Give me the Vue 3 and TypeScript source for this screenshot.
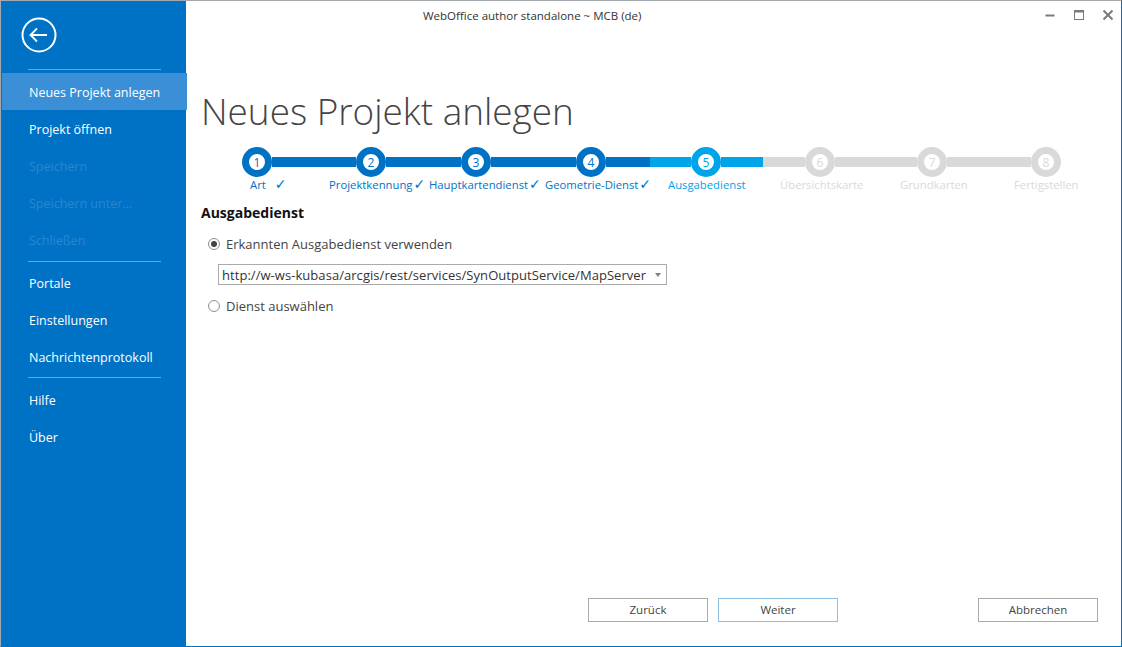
<script setup lang="ts">
type State = "done" | "current" | "todo";

interface Step {
	num: number;
	label: string;
	state: State;
	width: number;
	circleAt: number;
	labelAt: number;
}

type MenuEntry = { sep: true; mid?: boolean } | { sep?: false; text: string; active?: boolean; disabled?: boolean };

const menu: MenuEntry[] = [
	{ text: "Neues Projekt anlegen", active: true },
	{ text: "Projekt öffnen" },
	{ text: "Speichern", disabled: true },
	{ text: "Speichern unter...", disabled: true },
	{ text: "Schließen", disabled: true },
	{ sep: true, mid: true },
	{ text: "Portale" },
	{ text: "Einstellungen" },
	{ text: "Nachrichtenprotokoll" },
	{ sep: true },
	{ text: "Hilfe" },
	{ text: "Über" },
];

const steps: Step[] = [
	{ num: 1, label: "Art", state: "done", width: 114, circleAt: 57, labelAt: 50 },
	{ num: 2, label: "Projektkennung", state: "done", width: 109, circleAt: 57, labelAt: 15 },
	{ num: 3, label: "Hauptkartendienst", state: "done", width: 110, circleAt: 53, labelAt: 6 },
	{ num: 4, label: "Geometrie-Dienst", state: "done", width: 117, circleAt: 58, labelAt: 12 },
	{ num: 5, label: "Ausgabedienst", state: "current", width: 113, circleAt: 56, labelAt: 18 },
	{ num: 6, label: "Übersichtskarte", state: "todo", width: 113, circleAt: 57, labelAt: 17 },
	{ num: 7, label: "Grundkarten", state: "todo", width: 114, circleAt: 56, labelAt: 24 },
	{ num: 8, label: "Fertigstellen", state: "todo", width: 112, circleAt: 56, labelAt: 24 },
];
</script>

<template>
	<div class="window">
		<aside class="sidebar">
			<button class="back" aria-label="Zurück">
				<svg width="36" height="36" viewBox="0 0 36 36" fill="none" stroke="#fff">
					<circle cx="18" cy="18" r="16.5" stroke-width="2" />
					<path d="M9.5 18H26M16 11.5L9.5 18L16 24.5" stroke-width="1.8" />
				</svg>
			</button>
			<div class="sep"></div>
			<template v-for="(item, i) in menu" :key="i">
				<div v-if="item.sep" class="sep" :class="{ mid: item.mid }"></div>
				<div v-else class="item" :class="{ active: item.active, disabled: item.disabled }">{{ item.text }}</div>
			</template>
		</aside>

		<main class="main">
			<header class="titlebar">
				<span class="apptitle">WebOffice author standalone ~ MCB (de)</span>
				<div class="winctl">
					<svg width="12" height="12" viewBox="0 0 12 12"><path d="M1.5 6.5h9" stroke="#7a7a7a" stroke-width="2" /></svg>
					<svg width="12" height="12" viewBox="0 0 12 12" fill="none" stroke="#7a7a7a"><rect x="1.5" y="1.5" width="9" height="9" /><path d="M1.5 2.5h9" stroke-width="2" /></svg>
					<svg width="12" height="12" viewBox="0 0 12 12" stroke="#7a7a7a" stroke-width="2"><path d="M1.5 1.5l9 9M10.5 1.5l-9 9" /></svg>
				</div>
			</header>

			<h1 class="title">Neues Projekt anlegen</h1>

			<div class="stepper">
				<div
					v-for="(s, i) in steps"
					:key="s.num"
					class="step"
					:class="s.state"
					:style="{ width: s.width + 'px' }"
				>
					<div class="track">
						<div class="bar" :class="{ none: i === 0 }" :style="{ width: s.circleAt - 15 + 'px' }"></div>
						<div class="circle"><span>{{ s.num }}</span></div>
						<div class="bar grow" :class="{ none: i === steps.length - 1 }"></div>
					</div>
					<div class="label" :style="{ marginLeft: s.labelAt + 'px' }">
						{{ s.label }}<span v-if="s.state === 'done'" class="check" :class="{ wide: i === 0 }">✓</span>
					</div>
				</div>
			</div>

			<h2 class="section">Ausgabedienst</h2>

			<label class="radio">
				<span class="dot on"></span>
				Erkannten Ausgabedienst verwenden
			</label>
			<div class="select">
				<span>http://w-ws-kubasa/arcgis/rest/services/SynOutputService/MapServer</span>
				<i class="caret"></i>
			</div>
			<label class="radio second">
				<span class="dot"></span>
				Dienst auswählen
			</label>

			<footer class="actions">
				<button class="btn">Zurück</button>
				<button class="btn focus">Weiter</button>
				<button class="btn cancel">Abbrechen</button>
			</footer>
		</main>
	</div>
</template>

<style>
html,
body {
	margin: 0;
	background: #fff;
}
</style>

<style scoped>
.window {
	width: 1122px;
	height: 647px;
	box-sizing: border-box;
	display: flex;
	border-top: 1px solid #a4a9ad;
	border-left: 1px solid #a4a9ad;
	border-right: 1px solid #0072c6;
	border-bottom: 1px solid #0072c6;
	background: #fff;
	font-family: "Open Sans", sans-serif;
	font-size: 13px;
	color: #444;
	overflow: hidden;
}
.sidebar {
	width: 185px;
	flex: none;
	background: #0072c6;
	color: #fff;
	font-size: 12.5px;
}
.back {
	display: block;
	margin: 16px 0 16px 20px;
	padding: 0;
	width: 36px;
	height: 36px;
	border: 0;
	background: none;
}
.sep {
	height: 1px;
	margin: 0 25px 3px 27px;
	background: #62a6dc;
}
.item {
	height: 37px;
	line-height: 39px;
	padding-left: 28px;
}
.item + .sep {
	margin-top: 2px;
}
.item + .sep.mid {
	margin-top: 3px;
	margin-bottom: 2px;
}
.item.active {
	background: #3a8fd6;
	margin-right: -1px;
	margin-left: 1px;
	padding-left: 27px;
}
.item.disabled {
	color: #2a86cf;
}
.main {
	flex: 1;
	display: flex;
	flex-direction: column;
	min-width: 0;
	padding-left: 15px;
	padding-right: 22px;
}
.titlebar {
	height: 30px;
	display: flex;
	align-items: flex-start;
	justify-content: space-between;
	margin-right: -15px;
}
.apptitle {
	margin: 7px 0 0 222px;
	font-size: 11.5px;
	color: #333;
}
.winctl {
	display: flex;
	gap: 17px;
	margin-top: 8px;
}
.title {
	margin: 56px 0 0;
	height: 48px;
	line-height: 48px;
	font-size: 36.9px;
	font-weight: 300;
	color: #444;
	white-space: nowrap;
}
.stepper {
	display: flex;
	margin-top: 12px;
	margin-left: -1px;
}
.step {
	flex: none;
}
.track {
	height: 30px;
	display: flex;
	align-items: center;
}
.bar {
	height: 10px;
	background: var(--c);
}
.bar.grow {
	flex: 1;
}
.bar.none {
	visibility: hidden;
}
.circle {
	width: 30px;
	height: 30px;
	flex: none;
	box-sizing: border-box;
	border-radius: 50%;
	background: #fff;
	border: 7px solid var(--c);
	display: flex;
	align-items: center;
	justify-content: center;
	color: var(--c);
	font-size: 12px;
	font-weight: 500;
}
.label {
	margin-top: -1px;
	font-size: 11.3px;
	line-height: 17px;
	white-space: nowrap;
	color: var(--c);
}
.check {
	margin-left: 1px;
	font-family: "DejaVu Sans", sans-serif;
	font-size: 14px;
	font-weight: 700;
	line-height: 1;
}
.check.wide {
	margin-left: 9px;
}
.done {
	--c: #0072c6;
}
.current {
	--c: #00a4e8;
}
.todo {
	--c: #d9d9d9;
}
.section {
	margin: 10px 0 0;
	font-size: 14px;
	line-height: 20px;
	font-weight: 700;
	color: #111;
}
.radio {
	display: flex;
	align-items: center;
	gap: 6px;
	margin: 12px 0 0 7px;
	line-height: 18px;
}
.radio.second {
	margin-top: 12px;
}
.dot {
	width: 12px;
	height: 12px;
	box-sizing: border-box;
	border: 1px solid #8f8f8f;
	border-radius: 50%;
	display: flex;
	align-items: center;
	justify-content: center;
}
.dot.on::after {
	content: "";
	width: 6px;
	height: 6px;
	border-radius: 50%;
	background: #444;
}
.select {
	margin: 11px 0 0 17px;
	width: 449px;
	height: 21px;
	box-sizing: border-box;
	border: 1px solid #ababab;
	display: flex;
	align-items: center;
	justify-content: space-between;
	padding: 0 5px 0 3px;
	white-space: nowrap;
	color: #333;
	letter-spacing: 0.05px;
}
.caret {
	width: 0;
	height: 0;
	border-left: 3px solid transparent;
	border-right: 3px solid transparent;
	border-top: 4px solid #808080;
}
.actions {
	margin-top: auto;
	margin-bottom: 24px;
	display: flex;
	gap: 10px;
	padding-left: 387px;
}
.btn {
	width: 120px;
	height: 24px;
	box-sizing: border-box;
	background: #fff;
	border: 1px solid #ababab;
	font-family: inherit;
	font-size: 11.5px;
	color: #444;
	padding: 0 0 2px;
}
.btn.focus {
	border-color: #8cbfe2;
}
.btn.cancel {
	margin-left: 130px;
}
</style>
